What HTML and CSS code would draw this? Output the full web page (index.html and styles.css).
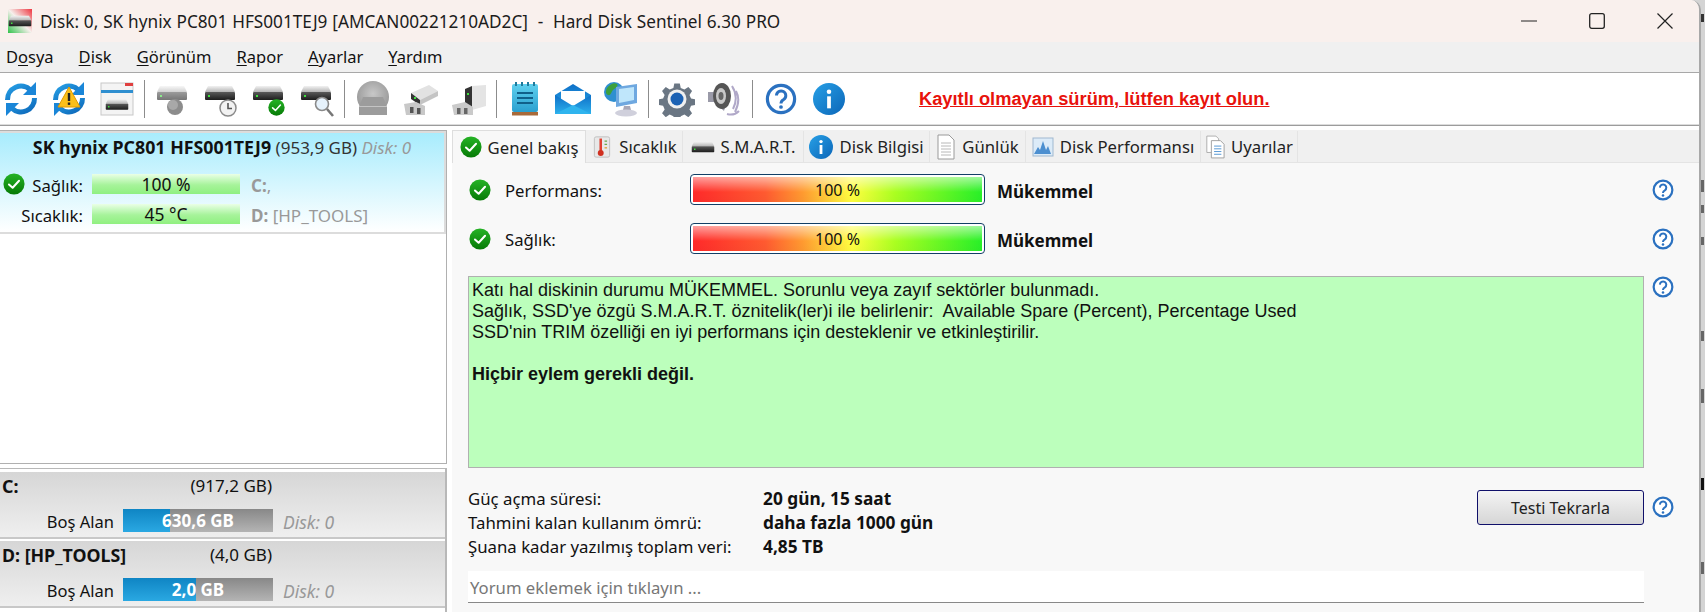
FILE: index.html
```html
<!DOCTYPE html>
<html lang="tr">
<head>
<meta charset="utf-8">
<title>Hard Disk Sentinel</title>
<link rel="stylesheet" href="styles.css">
</head>
<body>
<svg class="defs" width="0" height="0" aria-hidden="true">
  <defs>
    <linearGradient id="gBody" x1="0" y1="0" x2="0" y2="1"><stop offset="0" stop-color="#5a5a5a"/><stop offset="1" stop-color="#1c1c1c"/></linearGradient>
    <linearGradient id="gTop" x1="0" y1="0" x2="0" y2="1"><stop offset="0" stop-color="#f2f2f2"/><stop offset="1" stop-color="#b4b4b4"/></linearGradient>
    <linearGradient id="gBlue" x1="0" y1="0" x2="1" y2="1"><stop offset="0" stop-color="#27a0e6"/><stop offset="1" stop-color="#0c66b8"/></linearGradient>
    <linearGradient id="gGreen" x1="0" y1="0" x2="0" y2="1"><stop offset="0" stop-color="#26b326"/><stop offset="1" stop-color="#067a06"/></linearGradient>
    <linearGradient id="gNote" x1="0" y1="0" x2="0" y2="1"><stop offset="0" stop-color="#5fd0ee"/><stop offset="1" stop-color="#2aa0d0"/></linearGradient>
    <linearGradient id="gMail" x1="0" y1="0" x2="0" y2="1"><stop offset="0" stop-color="#0f70c8"/><stop offset="1" stop-color="#2cb0ec"/></linearGradient>
    <radialGradient id="gGray" cx=".5" cy=".4" r=".7"><stop offset="0" stop-color="#c8c8c8"/><stop offset="1" stop-color="#8e8e8e"/></radialGradient>
    <symbol id="check" viewBox="0 0 24 24"><circle cx="12" cy="12" r="11.5" fill="url(#gGreen)"/><path d="M6.5 12.5l4 3.6 7-7.6" fill="none" stroke="#fff" stroke-width="2.2" stroke-linecap="round" stroke-linejoin="round"/></symbol>
    <symbol id="help" viewBox="0 0 24 24"><circle cx="12" cy="12" r="10.2" fill="#fff" stroke="#2b71c0" stroke-width="2.4"/><path d="M8.6 9.4a3.5 3.5 0 1 1 5.4 3c-1.3.8-2 1.4-2 2.9" fill="none" stroke="#2b71c0" stroke-width="2.2"/><circle cx="12" cy="18" r="1.4" fill="#2b71c0"/></symbol>
    <symbol id="info" viewBox="0 0 24 24"><circle cx="12" cy="12" r="12" fill="url(#gBlue)"/><circle cx="12" cy="6.6" r="1.7" fill="#fff"/><rect x="10.6" y="10" width="2.8" height="9" fill="#fff"/></symbol>
    <symbol id="hdd" viewBox="0 0 32 16"><path d="M4 1h24l3 6H1z" fill="url(#gTop)"/><rect x="1" y="7" width="30" height="8" rx="1" fill="url(#gBody)"/><rect x="4" y="10" width="2" height="2" fill="#3fe03f"/></symbol>
    <symbol id="sync" viewBox="0 0 36 36"><g fill="none" stroke="url(#gBlue)" stroke-width="5"><path d="M4.5 19a13.5 13.5 0 0 1 23-10"/><path d="M31.5 17a13.5 13.5 0 0 1-23 10"/></g><path d="M33 1v13H20z" fill="#1a86d8"/><path d="M3 35V22h13z" fill="#1a86d8"/></symbol>
    <symbol id="doc" viewBox="0 0 20 26"><path d="M2 1h11l5 5v19H2z" fill="#fff" stroke="#9a9a9a"/><path d="M5 9h10M5 12h10M5 15h10M5 18h10M5 21h10" stroke="#b8b8b8"/></symbol>
    <symbol id="docs" viewBox="0 0 22 26"><path d="M2 1h10l3 3v15H2z" fill="#fff" stroke="#a8a8a8"/><path d="M7 6h10l4 4v15H7z" fill="#fff" stroke="#9a9a9a"/><path d="M10 12h8M10 15h8M10 18h8M10 21h8" stroke="#4a90d0"/></symbol>
  </defs>
</svg>

<div class="window">
  <header class="titlebar">
    <svg class="app-icon" viewBox="0 0 24 24"><defs><linearGradient id="gApp" x1="0" y1="1" x2="1" y2="0"><stop offset="0" stop-color="#2fc24a"/><stop offset=".5" stop-color="#f6efec"/><stop offset="1" stop-color="#ee3540"/></linearGradient></defs><rect width="24" height="24" fill="url(#gApp)"/><use href="#hdd" x="0" y="6" width="24" height="12"/></svg>
    <span class="title-text">Disk: 0, SK hynix PC801 HFS001TEJ9 [AMCAN00221210AD2C]  -  Hard Disk Sentinel 6.30 PRO</span>
    <div class="win-controls">
      <svg class="win-btn" viewBox="0 0 16 16"><path d="M0 8h16" stroke="#222" stroke-width="1"/></svg>
      <svg class="win-btn" viewBox="0 0 16 16"><rect x=".7" y=".7" width="14.6" height="14.6" rx="2" fill="none" stroke="#222" stroke-width="1.3"/></svg>
      <svg class="win-btn" viewBox="0 0 16 16"><path d="M.5.5l15 15M15.500.5l-15 15" stroke="#222" stroke-width="1.2"/></svg>
    </div>
  </header>

  <nav class="menubar">
    <span class="menu-item">D<u>o</u>sya</span>
    <span class="menu-item"><u>D</u>isk</span>
    <span class="menu-item"><u>G</u>örünüm</span>
    <span class="menu-item"><u>R</u>apor</span>
    <span class="menu-item"><u>A</u>yarlar</span>
    <span class="menu-item"><u>Y</u>ardım</span>
  </nav>

  <div class="toolbar">
    <svg class="tool first" viewBox="0 0 36 36"><use href="#sync" width="36" height="36"/></svg>
    <svg class="tool" viewBox="0 0 36 36"><use href="#sync" width="36" height="36"/><path d="M18 6l11 20H7z" fill="#fbbf1a" stroke="#e09a00"/><rect x="16.800" y="12" width="2.400" height="8" fill="#222"/><rect x="16.800" y="21.500" width="2.400" height="2.400" fill="#222"/></svg>
    <svg class="tool" viewBox="0 0 36 36"><rect x="2" y="2" width="32" height="32" fill="#f4f4f4" stroke="#c8c8c8"/><rect x="2" y="9" width="32" height="3" fill="#2f8fd0"/><rect x="26" y="2" width="8" height="3" fill="#e04040"/><use href="#hdd" x="6" y="17" width="24" height="13"/></svg>
    <i class="sep"></i>
    <svg class="tool" viewBox="0 0 36 36"><g opacity=".6"><use href="#hdd" x="1" y="4" width="32" height="16"/></g><circle cx="20" cy="26" r="8" fill="#8c8c8c"/><circle cx="18" cy="24" r="5" fill="#a8a8a8"/></svg>
    <svg class="tool" viewBox="0 0 36 36"><use href="#hdd" x="1" y="4" width="32" height="16"/><circle cx="25" cy="27" r="8" fill="#f2f2f2" stroke="#8a8a8a" stroke-width="1.500"/><path d="M25 22v5.500h4" fill="none" stroke="#555" stroke-width="1.600"/></svg>
    <svg class="tool" viewBox="0 0 36 36"><use href="#hdd" x="1" y="4" width="32" height="16"/><use href="#check" x="17" y="18" width="17" height="17"/></svg>
    <svg class="tool" viewBox="0 0 36 36"><use href="#hdd" x="1" y="4" width="32" height="16"/><circle cx="23" cy="23" r="6.500" fill="#e6f2fc" stroke="#8a8a8a" stroke-width="1.600"/><path d="M28 28l6 7" stroke="#777" stroke-width="2.600"/></svg>
    <i class="sep"></i>
    <svg class="tool" viewBox="0 0 36 36"><circle cx="18" cy="16" r="16" fill="url(#gGray)"/><path d="M4 26l4-10h20l4 10v8H4z" fill="#9c9c9c"/><rect x="4" y="25" width="28" height="1" fill="#c4c4c4"/></svg>
    <svg class="tool" viewBox="0 0 36 36"><path d="M8 12L26 4l9 6-18 9z" fill="#e2e2e2"/><path d="M8 12l9 7v5l-9-6z" fill="#333"/><path d="M17 19l18-9v5l-18 9z" fill="#c4c4c4"/><rect x="11" y="16" width="2" height="2" fill="#3fe03f"/><path d="M1 23l12-2 9 4v9H3z" fill="#c8c8c8"/><rect x="7" y="26" width="3.500" height="6" fill="#555"/><rect x="14" y="27" width="3.500" height="6" fill="#555"/></svg>
    <svg class="tool" viewBox="0 0 36 36"><path d="M21 5l14-1v21l-14 4z" fill="#e4e4e4"/><path d="M14 8l7-3v24l-7-4z" fill="#333"/><rect x="16" y="12" width="2" height="2" fill="#3fe03f"/><path d="M1 24l13-3 8 5v8H3z" fill="#cacaca"/><rect x="6" y="27" width="3.500" height="6" fill="#666"/><rect x="13" y="27" width="3.500" height="6" fill="#666"/></svg>
    <i class="sep"></i>
    <svg class="tool" viewBox="0 0 36 36"><rect x="5" y="3" width="26" height="28" rx="2" fill="url(#gNote)"/><path d="M9 1v4M15 1v4M21 1v4M27 1v4" stroke="#1f7a9c" stroke-width="2"/><path d="M10 12h16M10 17h16M10 22h16" stroke="#10608a" stroke-width="2"/><rect x="5" y="31" width="26" height="3.500" fill="#a86a3a"/></svg>
    <svg class="tool" viewBox="0 0 36 36"><path d="M0 14L18 3l18 11v19H0z" fill="url(#gMail)"/><path d="M6 10h24v11l-12 6-12-6z" fill="#fff"/><path d="M0 14l18 11 18-11v19H0z" fill="url(#gMail)"/><path d="M0 33l18-9 18 9z" fill="#2fb4ee"/></svg>
    <svg class="tool" viewBox="0 0 36 36"><circle cx="11" cy="11" r="10" fill="#2f8fd0"/><path d="M4 7c3-4 8-6 10-4s-2 4-4 6-2 6-5 5-2-5-1-7z" fill="#3da03d"/><path d="M13 6l21-3v19l-21 4z" fill="#6fa8e0"/><path d="M16 8l15-2v13l-15 3z" fill="#bfe6fb"/><path d="M21 25h6l1 4h-8z" fill="#a8a8b8"/><ellipse cx="23" cy="32" rx="11" ry="3.500" fill="#d0d0dc"/></svg>
    <i class="sep"></i>
    <svg class="tool" viewBox="0 0 36 36"><path d="M15 1h6l1 5 4 1.700 4.300-2.700 4 4.200-2.800 4.300 1.700 3.800 4.800 1v6l-4.800 1-1.700 4 2.800 4.200-4 4.200-4.300-2.800-4 1.700-1 4.800h-6l-1-4.800-4-1.700-4.300 2.800-4-4.200 2.800-4.200-1.700-4-4.800-1v-6l4.800-1 1.700-3.800-2.800-4.300 4-4.200 4.300 2.700 4-1.700z" fill="#6a7683" transform="translate(1.500 1.500) scale(.92)"/><circle cx="18" cy="18" r="9.500" fill="#f0f0f0"/><circle cx="18" cy="18" r="6.500" fill="#1c62b4"/></svg>
    <svg class="tool" viewBox="0 0 36 36"><path d="M1 11h6L17 2q6 13 0 28L7 21H1z" fill="#9a9aa8"/><ellipse cx="15" cy="15" rx="9" ry="13" fill="#555"/><ellipse cx="14" cy="15" rx="5" ry="8" fill="#c8c8c8"/><ellipse cx="14" cy="15" rx="2.500" ry="4" fill="#666"/><path d="M25 5q7 11 1 23M29 10q5 9-1 21M20 33q7 2 12-3" fill="none" stroke="#b0a8c8" stroke-width="2"/></svg>
    <i class="sep"></i>
    <svg class="tool" viewBox="-1.500 -1.500 27 27"><use href="#help" width="24" height="24"/></svg>
    <svg class="tool" viewBox="-1.500 -1.500 27 27"><use href="#info" width="24" height="24"/></svg>
    <span class="register">Kayıtlı olmayan sürüm, lütfen kayıt olun.</span>
  </div>

  <main class="main">
    <aside class="left">
      <section class="disk-list">
        <div class="disk-card">
          <div class="disk-name"><b>SK hynix PC801 HFS001TEJ9</b> <span>(953,9 GB)</span> <em>Disk: 0</em></div>
          <div class="disk-grid">
            <span class="disk-label"><svg class="ic22"><use href="#check"/></svg><span>Sağlık:</span></span>
            <span class="gbar">100 %</span>
            <span class="vol"><b>C:</b>,</span>
            <span class="disk-label"><span>Sıcaklık:</span></span>
            <span class="gbar">45 °C</span>
            <span class="vol"><b>D:</b> [HP_TOOLS]</span>
          </div>
        </div>
      </section>
      <section class="drives">
        <div class="drive">
          <div class="drive-head"><b>C:</b><span>(917,2 GB)</span></div>
          <div class="drive-row">
            <span class="free">Boş Alan</span>
            <span class="space"><i class="space-fill" style="width:47px"></i><span class="space-text">630,6 GB</span></span>
            <em>Disk: 0</em>
          </div>
        </div>
        <div class="drive">
          <div class="drive-head"><b>D: [HP_TOOLS]</b><span>(4,0 GB)</span></div>
          <div class="drive-row">
            <span class="free">Boş Alan</span>
            <span class="space"><i class="space-fill" style="width:73px"></i><span class="space-text">2,0 GB</span></span>
            <em>Disk: 0</em>
          </div>
        </div>
      </section>
    </aside>

    <section class="right">
      <div class="tabs">
        <div class="tab active" style="width:134px"><svg class="ic22"><use href="#check"/></svg><span>Genel bakış</span></div>
        <div class="tab" style="width:97px"><svg class="ic22" viewBox="0 0 22 26"><rect x="2" y="1" width="18" height="24" rx="2" fill="#e8e8e8" stroke="#bbb"/><rect x="8" y="3" width="3" height="15" fill="#e04030"/><circle cx="9.500" cy="20" r="3.500" fill="#d03020"/><path d="M14 6h3M14 10h3" stroke="#6aa84f" stroke-width="1.500"/><path d="M14 14h3" stroke="#e0a030" stroke-width="1.500"/></svg><span>Sıcaklık</span></div>
        <div class="tab" style="width:121px"><svg class="ic-hdd"><use href="#hdd"/></svg><span>S.M.A.R.T.</span></div>
        <div class="tab" style="width:126px"><svg class="ic24"><use href="#info"/></svg><span>Disk Bilgisi</span></div>
        <div class="tab" style="width:96px"><svg class="ic-doc"><use href="#doc"/></svg><span>Günlük</span></div>
        <div class="tab" style="width:175px"><svg class="ic22" viewBox="0 0 22 22"><rect x="1" y="2" width="20" height="18" fill="#dcebf8" stroke="#9fb8d0"/><path d="M2 18l4-7 2 3 3-9 3 9 2-4 3 8z" fill="#4c8fd0"/></svg><span>Disk Performansı</span></div>
        <div class="tab" style="width:97px"><svg class="ic-doc"><use href="#docs"/></svg><span>Uyarılar</span></div>
      </div>

      <div class="content">
        <div class="status-row">
          <svg class="ic22 status-icon"><use href="#check"/></svg>
          <span class="status-label">Performans:</span>
          <span class="rainbow"><span>100 %</span></span>
          <b class="status-value">Mükemmel</b>
          <svg class="ic22 help"><use href="#help"/></svg>
        </div>
        <div class="status-row">
          <svg class="ic22 status-icon"><use href="#check"/></svg>
          <span class="status-label">Sağlık:</span>
          <span class="rainbow"><span>100 %</span></span>
          <b class="status-value">Mükemmel</b>
          <svg class="ic22 help"><use href="#help"/></svg>
        </div>

        <div class="message-row">
          <div class="message">
            <p>Katı hal diskinin durumu MÜKEMMEL. Sorunlu veya zayıf sektörler bulunmadı.</p>
            <p>Sağlık, SSD'ye özgü S.M.A.R.T. öznitelik(ler)i ile belirlenir:&nbsp; Available Spare (Percent), Percentage Used</p>
            <p>SSD'nin TRIM özelliği en iyi performans için desteklenir ve etkinleştirilir.</p>
            <p class="blank">&nbsp;</p>
            <p><b>Hiçbir eylem gerekli değil.</b></p>
          </div>
          <svg class="ic22 help"><use href="#help"/></svg>
        </div>

        <div class="facts-row">
          <dl class="facts">
            <dt>Güç açma süresi:</dt><dd>20 gün, 15 saat</dd>
            <dt>Tahmini kalan kullanım ömrü:</dt><dd>daha fazla 1000 gün</dd>
            <dt>Şuana kadar yazılmış toplam veri:</dt><dd>4,85 TB</dd>
          </dl>
          <button class="retest">Testi Tekrarla</button>
          <svg class="ic22 help"><use href="#help"/></svg>
        </div>

        <div class="comment">Yorum eklemek için tıklayın ...</div>
      </div>
    </section>
  </main>
</div>
<div class="behind" aria-hidden="true"><i class="mark m1"></i><i class="mark m2"></i><i class="mark m3"></i><i class="mark m4"></i><i class="mark m5"></i><i class="mark m6"></i><i class="mark m7"></i><i class="mark m8"></i></div>
</body>
</html>
```

FILE: styles.css
```css
* { box-sizing: border-box; }
html, body { margin: 0; padding: 0; height: 612px; overflow: hidden; }
body {
  display: flex;
  width: 1705px;
  background: #d4d4d4;
  font-family: "Noto Sans", "Open Sans", sans-serif;
  font-size: 16.700px;
  color: #111;
}
b { font-size: 17px; }
.defs { position: absolute; }
.window {
  width: 1701px;
  height: 612px;
  flex: none;
  display: flex;
  flex-direction: column;
  background: #f4f4f4;
  border-top-right-radius: 10px;
  border-right: 2px solid #a8a8a8;
  overflow: hidden;
}
.behind { flex: 1; display: flex; flex-direction: column; }
.mark { display: block; width: 3px; background: #666; flex: none; }
.m1 { height: 8px; margin-top: 14px; background: #333; }
.m2 { height: 12px; margin-top: 158px; }
.m3 { height: 8px; margin-top: 13px; }
.m4 { height: 8px; margin-top: 24px; }
.m5 { height: 10px; margin-top: 86px; }
.m6 { height: 14px; margin-top: 48px; }
.m7 { height: 12px; margin-top: 75px; background: #111; }
.m8 { height: 12px; margin-top: 72px; }

.titlebar {
  height: 42px;
  flex: none;
  display: flex;
  align-items: center;
  padding-left: 8px;
  background: #f9f0ed;
}
.app-icon { width: 24px; height: 24px; margin-right: 8px; flex: none; }
.title-text { font-size: 17.200px; word-spacing: .4px; white-space: pre; color: #1c1c1c; }
.win-controls { margin-left: auto; display: flex; align-items: center; gap: 52px; padding-right: 26px; }
.win-btn { width: 16px; height: 16px; display: block; }

.menubar {
  height: 31px;
  flex: none;
  display: flex;
  align-items: center;
  gap: 25px;
  padding: 0 0 2px 6px;
  background: #f0f0f0;
  border-bottom: 1px solid #a8a8a8;
}
.menu-item { font-size: 16.500px; }
.menu-item u { text-underline-offset: 2px; }

.toolbar {
  height: 52px;
  flex: none;
  display: flex;
  align-items: center;
  padding-left: 3px;
  background: #fff;
  border-bottom: 1px solid #dcdcdc;
}
.tool { width: 36px; height: 36px; flex: none; margin: 0 6px; }
.tool.first { margin-left: 0; }
.sep { width: 1px; height: 38px; background: #8c8c8c; margin: 0 4px 0 3px; flex: none; }
.register {
  margin-left: 66px;
  padding-top: 1px;
  font-family: "Liberation Sans", Arial, sans-serif;
  font-size: 18.300px;
  font-weight: bold;
  color: #e8120c;
  text-decoration: underline;
}

.main {
  flex: 1;
  min-height: 0;
  display: flex;
  border-top: 1px solid #9c9c9c;
  background: #fff;
  padding-top: 4px;
  gap: 5px;
}
.left { width: 447px; flex: none; display: flex; flex-direction: column; gap: 4px; }
.disk-list {
  height: 334px;
  flex: none;
  background: #fff;
  border: 1px solid #b0b0b0;
  border-left: 0;
}
.disk-card {
  height: 103px;
  padding-top: 2px;
  border: 2px solid #dcdcdc;
  border-left: 0;
  background: linear-gradient(#a8ecfd, #fff);
}
.disk-name { text-align: center; height: 24px; line-height: 24px; white-space: nowrap; font-size: 17px; }
.disk-name b { font-size: 17.800px; }
.disk-name span { color: #333; }
em { color: #999; }
.disk-grid {
  display: grid;
  grid-template-columns: 83px 148px 1fr;
  grid-auto-rows: 20px;
  row-gap: 10px;
  column-gap: 9px;
  margin-top: 15px;
  align-items: center;
}
.disk-label { display: flex; align-items: center; padding-left: 3px; }
.disk-label > span { margin-left: auto; padding-top: 2px; }
.ic22 { width: 22px; height: 22px; display: block; flex: none; }
.ic24 { width: 24px; height: 24px; display: block; flex: none; }
.ic-hdd { width: 24px; height: 12px; display: block; flex: none; }
.ic-doc { width: 20px; height: 26px; display: block; flex: none; }
.gbar {
  height: 20px;
  line-height: 21px;
  text-align: center;
  font-size: 17.500px;
  background: linear-gradient(#eaffe6, #a6f39a 55%, #8ff080);
}
.vol { margin-left: 2px; padding-top: 2px; color: #999; font-size: 17px; }

.drives {
  flex: 1;
  display: flex;
  flex-direction: column;
  gap: 2px;
  padding-top: 3px;
  border-top: 1px solid #b8b8b8;
  border-right: 2px solid #b8b8b8;
}
.drive {
  height: 67px;
  padding: 0 0 0 2px;
  background: linear-gradient(#d6d6d6, #efefef);
  border-bottom: 2px solid #c8c8c8;
}
.drive-head { width: 270px; display: flex; justify-content: space-between; height: 28px; line-height: 28px; font-size: 17px; }
.drive-head b { font-size: 17.800px; }
.drive-row { display: flex; align-items: center; margin-top: 6px; }
.free { width: 112px; text-align: right; padding-top: 3px; font-size: 16.500px; }
.space {
  width: 150px;
  height: 23px;
  margin-left: 9px;
  display: flex;
  align-items: center;
  justify-content: center;
  position: relative;
  background: linear-gradient(#888, #b4b4b4);
}
.space-fill { position: absolute; left: 0; top: 0; bottom: 0; background: linear-gradient(#0f85c4, #2aa8e2); }
.space-text { position: relative; color: #fff; font-weight: bold; font-size: 17px; padding-top: 1px; }
.drive-row em { margin-left: 10px; padding-top: 4px; font-size: 17.500px; }

.right { flex: 1; min-width: 0; display: flex; flex-direction: column; background: #f8f8f8; }
.tabs { height: 33px; flex: none; display: flex; align-items: flex-end; background: #f0f0f0; border-bottom: 1px solid #e4e4e4; }
.tab {
  height: 31px;
  flex: none;
  display: flex;
  align-items: center;
  justify-content: center;
  gap: 6px;
  white-space: nowrap;
  border-right: 1px solid #e4e4e4;
  color: #222;
  font-size: 16.700px;
}
.tab.active { height: 33px; margin-bottom: -1px; background: #f8f8f8; border: 1px solid #dedede; border-bottom: 0; }

.content { flex: 1; padding: 11px 0 0 16px; display: flex; flex-direction: column; }
.status-row { display: flex; align-items: center; height: 31px; margin-bottom: 18px; }
.status-icon { margin-right: 14px; margin-left: 1px; }
.status-label { width: 185px; padding-top: 2px; }
.rainbow {
  width: 295px;
  height: 31px;
  padding: 2px;
  background: #fff;
  border: 1px solid #123f66;
  border-radius: 4px;
  display: block;
}
.rainbow span {
  display: block;
  height: 100%;
  line-height: 26px;
  text-align: center;
  font-size: 16px;
  background:
    linear-gradient(rgba(255,255,255,.55), rgba(255,255,255,0) 60%, rgba(0,0,0,.02)),
    linear-gradient(90deg, #ff2a2a, #ff5a30 25%, #ff9a30 38%, #ffff40 55%, #aaff20 70%, #28f028 100%);
}
.status-value { margin-left: 12px; padding-top: 4px; }
.help { margin-left: auto; margin-right: 25px; }
.message-row { display: flex; align-items: flex-start; height: 192px; margin-top: 4px; }
.message {
  width: 1176px;
  height: 192px;
  padding: 3px 3px;
  background: #bcffbc;
  border: 1px solid #b0b0b0;
  font-family: "Liberation Sans", Arial, sans-serif;
  font-size: 18px;
  line-height: 21px;
}
.message b { font-size: 18px; }
.message p { margin: 0; }
.message p.blank { height: 21px; }
.facts-row { display: flex; align-items: flex-start; margin-top: 18px; height: 85px; }
.facts { margin: 0; display: grid; grid-template-columns: 295px 1fr; grid-auto-rows: 24px; align-items: center; width: 700px; font-size: 16.800px; }
.facts dt, .facts dd { margin: 0; }
.facts dd { font-weight: bold; font-size: 17.300px; }
.retest {
  margin-left: 309px;
  width: 167px;
  height: 35px;
  margin-top: 4px;
  font: inherit;
  font-size: 16px;
  color: #222;
  border: 1px solid #10106a;
  border-radius: 3px;
  background: linear-gradient(#f4f4f4, #d6d6d6);
}
.facts-row .help { margin-top: 10px; }
.comment {
  width: 1176px;
  height: 32px;
  line-height: 33px;
  padding-left: 2px;
  background: #fff;
  border-bottom: 1px solid #888;
  color: #777;
}
```
